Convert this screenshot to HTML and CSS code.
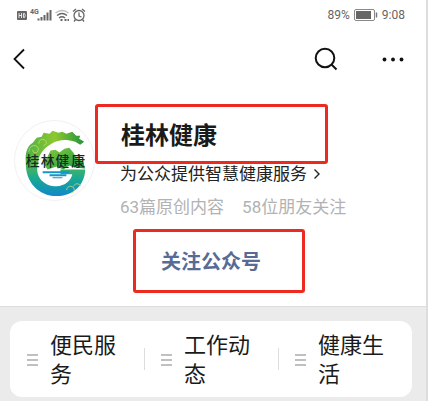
FILE: index.html
```html
<!DOCTYPE html>
<html lang="zh-CN">
<head>
    <meta charset="UTF-8">
    <meta name="viewport" content="width=device-width, initial-scale=1.0">
    <title>桂林健康</title>
    <link rel="stylesheet" href="styles.css">
</head>
<body>
    <div class="page">
        <div class="status-bar">
            <svg width="70" height="16" viewBox="0 0 70 16" fill="none" stroke="#666" aria-hidden="true">
                <rect x="0" y="4" width="10" height="9" rx="1" fill="#666" stroke="none"/>
                <path d="M2 6v5M4.500 6v5M2 8.500h2.500M6.500 6.500v4h1q1.500-2 0-4z" stroke="#fff" stroke-width=".8"/>
                <text class="net-label" x="13" y="7">4G</text>
                <path d="M21.500 13.500v-2M24.500 13.500v-3.500M27.500 13.500v-5.500M30.500 13.500v-8M33.500 13.500v-10.500" stroke-width="2"/>
                <path d="M38.500 6q6.500-5 13 0" stroke="#bbb" stroke-width="1.300"/>
                <path d="M40 8.500q5-4 10 0M42 11q3-2.500 6 0" stroke-width="1.400"/>
                <path d="M43.500 13h2M47.500 13h2M50.500 13h1.500" stroke-width="1.800"/>
                <circle cx="62" cy="8.500" r="5" stroke-width="1.300"/>
                <path d="M62 5.500v3.500l2.500 1M56 4.500l3-2.500M68 4.500l-3-2.500M58.500 12.500l-1.500 2M65.500 12.500l1.500 2" stroke-width="1.300"/>
            </svg>
            <div class="status-right">
                <span>89%</span>
                <svg width="24" height="12" viewBox="0 0 24 12" aria-hidden="true">
                    <rect x=".5" y=".5" width="20" height="11" rx="1.500" fill="#fff" stroke="#888"/>
                    <rect x="2" y="2" width="15" height="8" fill="#666"/>
                    <path d="M22.500 3.500v5" stroke="#777" stroke-width="1.500"/>
                </svg>
                <span>9:08</span>
            </div>
        </div>

        <div class="nav-bar">
            <button class="icon-button" aria-label="返回">
                <svg width="14" height="22" viewBox="0 0 14 22"><path d="M12 1.500L2.500 11l9.500 9.500" fill="none" stroke="#111" stroke-width="1.800"/></svg>
            </button>
            <div class="nav-actions">
                <button class="icon-button" aria-label="搜索">
                    <svg width="24" height="24" viewBox="0 0 24 24" fill="none" stroke="#111" stroke-width="2"><circle cx="11" cy="11" r="9.300"/><path d="M17.500 17.500l5 5"/></svg>
                </button>
                <button class="icon-button" aria-label="更多">
                    <svg width="22" height="24" viewBox="0 0 22 24" fill="#111"><circle cx="2.500" cy="12.500" r="1.900"/><circle cx="11" cy="12.500" r="1.900"/><circle cx="19.500" cy="12.500" r="1.900"/></svg>
                </button>
            </div>
        </div>

        <div class="profile">
            <svg class="avatar" viewBox="0 0 82 82" role="img" aria-label="桂林健康">
                <defs>
                    <linearGradient id="arc" x1="0" y1="0" x2="1" y2="0">
                        <stop offset="0" stop-color="#4fb04a"/>
                        <stop offset=".5" stop-color="#8cc92e"/>
                        <stop offset="1" stop-color="#25923f"/>
                    </linearGradient>
                    <linearGradient id="bowl" x1="0" y1="0" x2="0" y2="1">
                        <stop offset="0" stop-color="#5ab946"/>
                        <stop offset=".5" stop-color="#18a994"/>
                        <stop offset="1" stop-color="#1187cb"/>
                    </linearGradient>
                    <linearGradient id="hill" x1="0" y1="0" x2="1" y2="1">
                        <stop offset="0" stop-color="#8ccb38"/>
                        <stop offset="1" stop-color="#11984d"/>
                    </linearGradient>
                </defs>
                <circle cx="41" cy="41" r="40.500" fill="#fff" stroke="#f0f0f0"/>
                <path d="M12 43C11 32 14 26 19 23L23 18L28 17L30 13L36 14L39 11L45 13L49 12L53 14L59 12L63 16L67 16L66 19L71 22L67 25L62 22C52 19 45 20 38 24C29 29 25 36 24 44Z" fill="url(#arc)"/>
                <path d="M12 42H25C20 55 28 66 41 67C51 68 58 61 59 55H47V50H72C72 66 59 77 43 77C25 77 11 63 12 42Z" fill="url(#bowl)"/>
                <path d="M30 44L34 37L37 31L42 30L46 33L51 29L56 28L60 33L63 38L70 42L72 49L61 48L56 46L50 50L43 47L34 50Z" fill="url(#hill)"/>
                <path d="M29 52H56V54H29ZM36 55H53V57H36ZM39 58H49V59H39Z" fill="#1595c8"/>
                <path d="M15 32q1-7 7-6q5 3 1 7q-4 1-4-3M25 24q1-6 6-4q4 4-1 6M53 71q2-6 7-3q3 4-2 6M60 67q4-5 8 0" fill="none" stroke="#c4df6a" stroke-width=".8"/>
                <text class="avatar-text" y="47"><tspan x="12">桂</tspan><tspan x="27">林</tspan><tspan x="42">健</tspan><tspan x="58">康</tspan></text>
            </svg>
            <div class="info">
                <div class="marked marked-name"><h1>桂林健康</h1></div>
                <a class="intro" href="#">为公众提供智慧健康服务
                    <svg width="8" height="12" viewBox="0 0 8 12"><path d="M1.500 1.500L6 6l-4.500 4.500" fill="none" stroke="#222" stroke-width="1.400"/></svg>
                </a>
                <div class="stats"><span>63篇原创内容</span><span>58位朋友关注</span></div>
                <div class="marked marked-follow"><button class="follow">关注公众号</button></div>
            </div>
        </div>

        <div class="menu-area">
            <div class="menu">
                <button class="menu-item"><span class="bars"></span><span>便民服务</span></button>
                <button class="menu-item"><span class="bars"></span><span>工作动态</span></button>
                <button class="menu-item"><span class="bars"></span><span>健康生活</span></button>
            </div>
        </div>
    </div>
</body>
</html>
```
FILE: styles.css
```css
* {
    box-sizing: border-box;
}
body {
    margin: 0;
    background: #fff;
    font-family: Roboto, "Noto Sans CJK SC", sans-serif;
    color: #1a1a1a;
}
button {
    padding: 0;
    border: none;
    background: none;
    font: inherit;
    color: inherit;
    cursor: pointer;
}
svg {
    display: block;
    flex: none;
}
.page {
    display: flex;
    flex-direction: column;
    min-height: 100vh;
    border-right: 2px solid #ddd;
}
.status-bar {
    display: flex;
    justify-content: space-between;
    align-items: center;
    height: 30px;
    padding: 0 21px 0 17px;
}
.status-right {
    display: flex;
    align-items: center;
    gap: 4px;
    font-size: 12px;
    color: #666;
}
.net-label {
    font-size: 7px;
    font-weight: bold;
    fill: #666;
    stroke: none;
}
.nav-bar {
    display: flex;
    justify-content: space-between;
    align-items: center;
    height: 58px;
    padding: 0 22px 0 12px;
}
.nav-actions {
    display: flex;
    gap: 44px;
}
.profile {
    display: flex;
    align-items: flex-start;
    padding: 16px 12px 13px 14px;
}
.avatar {
    width: 81px;
    height: 81px;
    margin-top: 16px;
}
.avatar-text {
    font-size: 14px;
    font-weight: 500;
    fill: #172b20;
}
.info {
    flex: 1;
}
.marked {
    display: flex;
    align-items: center;
    border: 3px solid #ec2a20;
    border-radius: 3px;
}
.marked-name {
    max-width: 233px;
    height: 60px;
    padding: 4px 0 0 23px;
}
.marked-name h1 {
    margin: 0;
    font-size: 24px;
    line-height: 32px;
}
.intro {
    display: flex;
    align-items: center;
    gap: 6px;
    margin: -2px 0 0 25px;
    font-size: 17px;
    line-height: 24px;
    color: #222;
    text-decoration: none;
}
.stats {
    display: flex;
    gap: 18px;
    margin: 9px 0 0 25px;
    font-size: 17px;
    line-height: 24px;
    color: #b2b2b2;
}
.marked-follow {
    width: 172px;
    height: 64px;
    margin: 10px 0 0 38px;
    padding: 0 0 2px 25px;
}
.follow {
    font-size: 20px;
    font-weight: bold;
    color: #576b95;
}
.menu-area {
    flex: 1;
    padding: 14px 14px 4px 10px;
    border-top: 1px solid #ddd;
    background: #ebebeb;
}
.menu {
    display: flex;
    border-radius: 12px;
    background: #fff;
}
.menu-item {
    position: relative;
    display: flex;
    flex: 1;
    align-items: center;
    gap: 12px;
    padding: 10px 24px 8px 17px;
    font-size: 22px;
    line-height: 29px;
    text-align: left;
}
.menu-item + .menu-item::before {
    content: "";
    position: absolute;
    left: 0;
    top: 27px;
    height: 22px;
    border-left: 1px solid #ddd;
}
.bars {
    flex: none;
    width: 11px;
    height: 12px;
    border-top: 2px solid #c0c0c0;
    border-bottom: 2px solid #c0c0c0;
    background: linear-gradient(#c0c0c0, #c0c0c0) center / 100% 2px no-repeat;
}
```
